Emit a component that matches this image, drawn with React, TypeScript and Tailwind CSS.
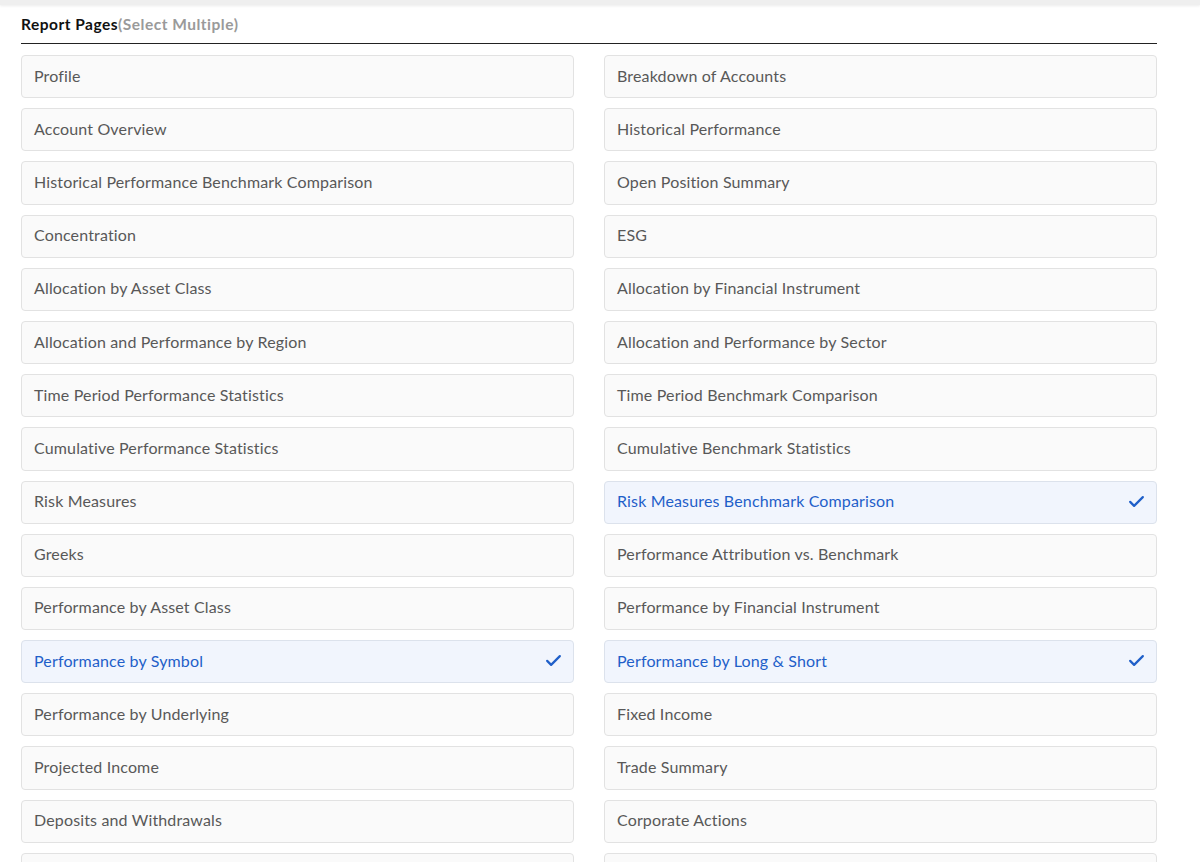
import React from "react";

const items: [string, boolean][] = [
  ["Profile", false],
  ["Breakdown of Accounts", false],
  ["Account Overview", false],
  ["Historical Performance", false],
  ["Historical Performance Benchmark Comparison", false],
  ["Open Position Summary", false],
  ["Concentration", false],
  ["ESG", false],
  ["Allocation by Asset Class", false],
  ["Allocation by Financial Instrument", false],
  ["Allocation and Performance by Region", false],
  ["Allocation and Performance by Sector", false],
  ["Time Period Performance Statistics", false],
  ["Time Period Benchmark Comparison", false],
  ["Cumulative Performance Statistics", false],
  ["Cumulative Benchmark Statistics", false],
  ["Risk Measures", false],
  ["Risk Measures Benchmark Comparison", true],
  ["Greeks", false],
  ["Performance Attribution vs. Benchmark", false],
  ["Performance by Asset Class", false],
  ["Performance by Financial Instrument", false],
  ["Performance by Symbol", true],
  ["Performance by Long & Short", true],
  ["Performance by Underlying", false],
  ["Fixed Income", false],
  ["Projected Income", false],
  ["Trade Summary", false],
  ["Deposits and Withdrawals", false],
  ["Corporate Actions", false],
  ["Dividends", false],
  ["Fees", false],
];

function Check() {
  return (
    <svg width="19" height="19" viewBox="0 0 24 24" fill="none" stroke="#1f5fc9" strokeWidth="2.8" strokeLinecap="round" strokeLinejoin="round">
      <path d="M4 12.5l5 5L20 6.5" />
    </svg>
  );
}

export default function App() {
  return (
    <div className="w-[1200px] h-[862px] overflow-hidden bg-white" style={{ fontFamily: "Lato, 'Open Sans', sans-serif" }}>
      <div className="h-[5px] bg-[#efefef] shadow-[0_1px_3px_rgba(0,0,0,0.08)]" />
      <div className="ml-[21px] w-[1136px]">
        <div className="pt-[10px] pb-[10px] border-b border-[#222] text-[15.5px] leading-[18px] tracking-[0.5px]">
          <span className="font-bold text-[#111]">Report Pages</span>
          <span className="font-bold text-[#9a9a9a]">(Select Multiple)</span>
        </div>
        <div className="grid grid-cols-2 gap-x-[30px] gap-y-[10px] mt-[11px]">
          {items.map(([label, sel]) => (
            <div
              key={label}
              className={
                sel
                  ? "h-[43.2px] flex items-center justify-between pl-[12px] pr-[10px] pb-[2px] rounded-[4px] border border-[#dce2ec] bg-[#f1f5fd] text-[#1f5fc9] text-[16px] tracking-[0.15px]"
                  : "h-[43.2px] flex items-center justify-between pl-[12px] pr-[10px] pb-[2px] rounded-[4px] border border-[#e2e2e2] bg-[#fafafa] text-[#585858] text-[16px] tracking-[0.15px]"
              }
            >
              <span>{label}</span>
              {sel ? <Check /> : null}
            </div>
          ))}
        </div>
      </div>
    </div>
  );
}
